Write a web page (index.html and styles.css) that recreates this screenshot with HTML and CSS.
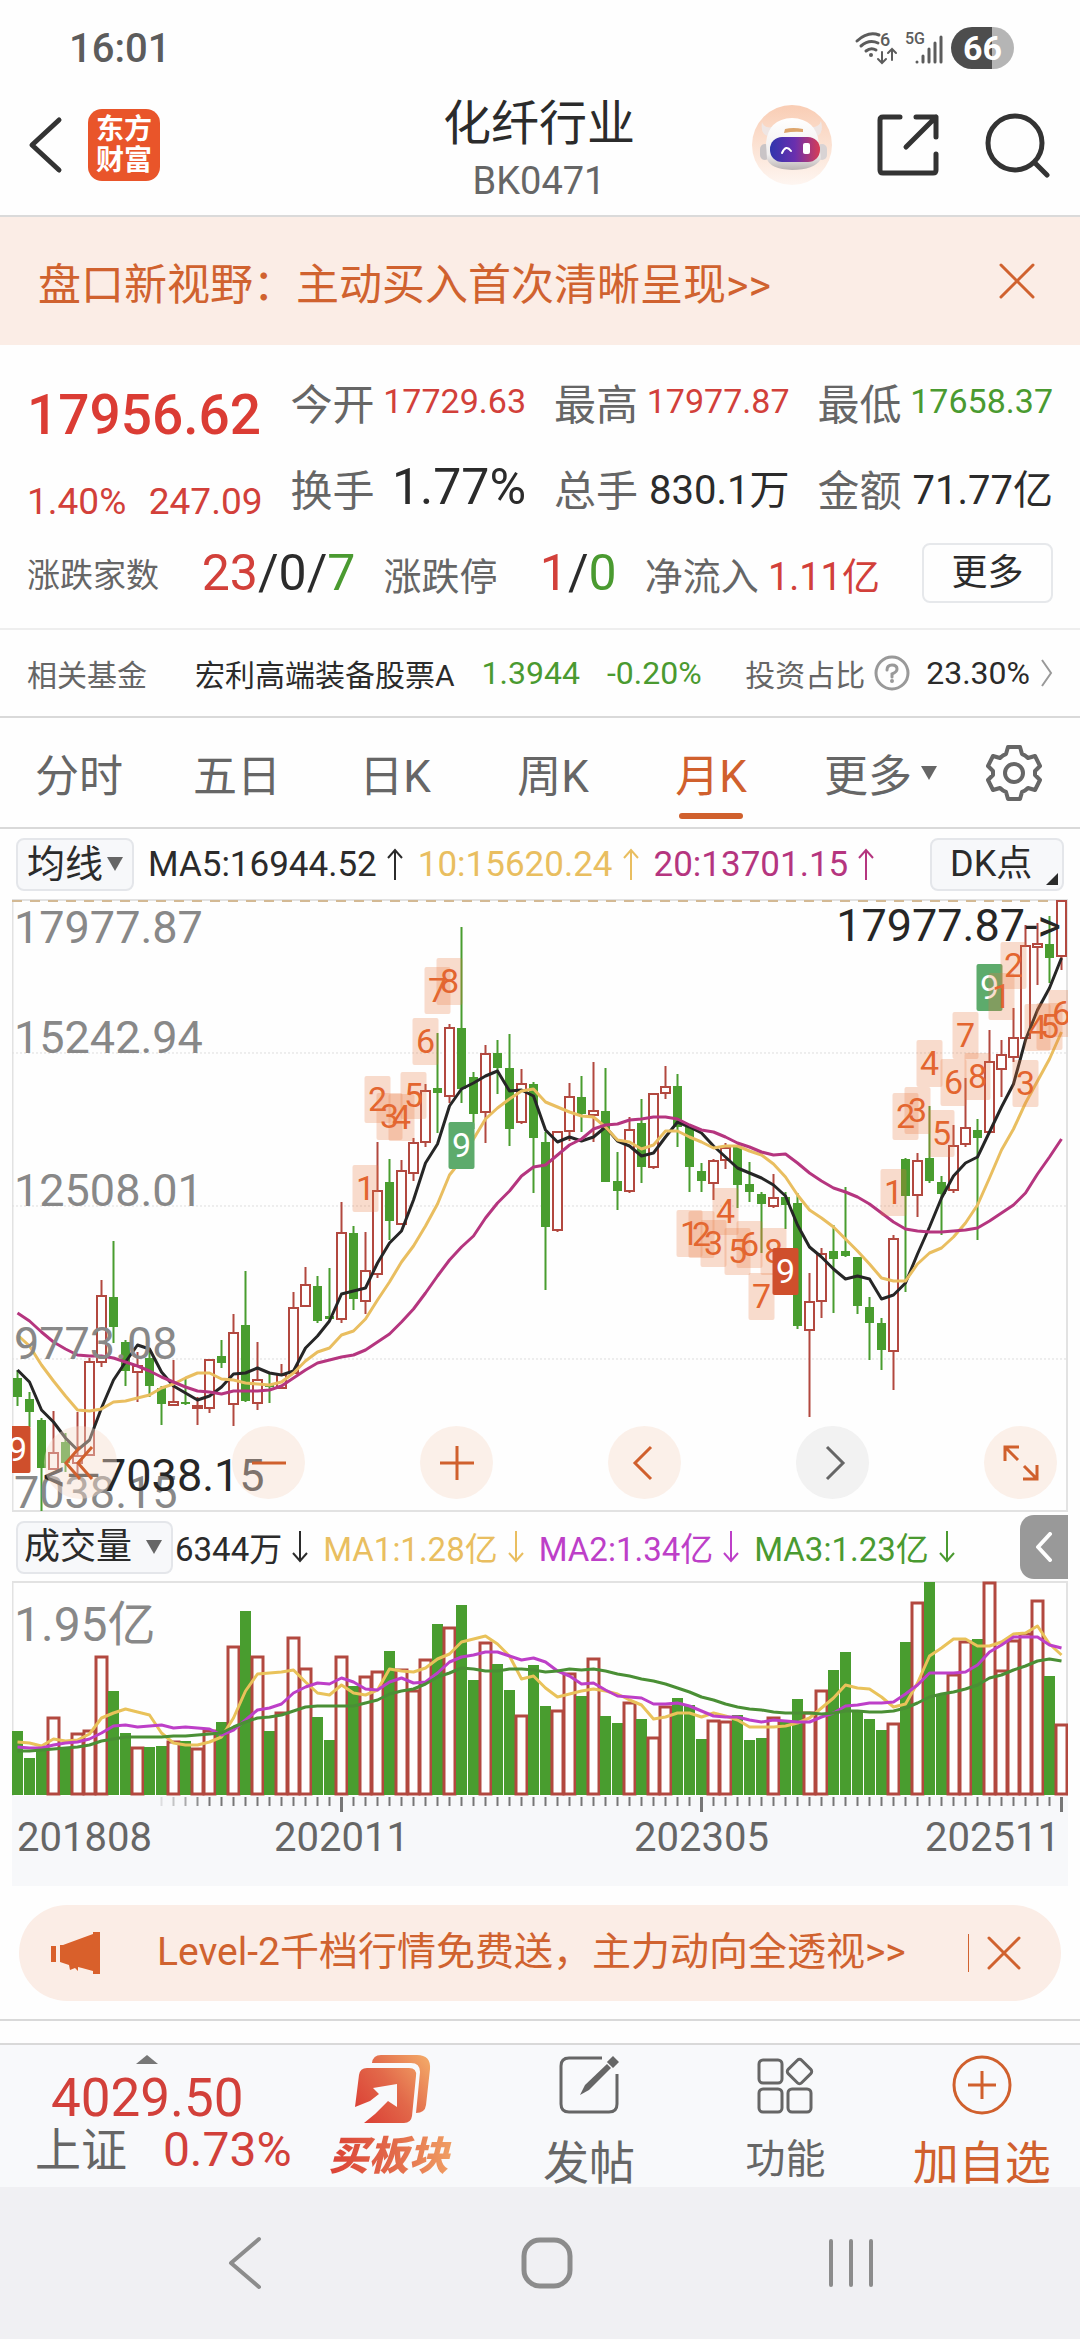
FILE: index.html
```html
<!DOCTYPE html>
<html lang="zh-CN">
<head>
<meta charset="utf-8">
<meta name="viewport" content="width=device-width, initial-scale=1">
<title>化纤行业 BK0471</title>
<link rel="stylesheet" href="styles.css">
</head>
<body>
<div class="statusbar">
  <span class="clock">16:01</span>
  <span class="status-icons">
    <svg width="42" height="34" viewBox="0 0 42 34" fill="none" stroke="#5c5c5c" stroke-width="3" stroke-linecap="round">
      <path d="M2 10Q13 0 24 4M6 15Q14 8 23 12M11 20Q16 16 21 19"/>
      <circle cx="16" cy="24" r="2" fill="#5c5c5c" stroke="none"/>
      <path d="M27 21V31M23 28L27 32L31 28M37 29V18M33 22L37 18L41 22" stroke-width="2"/>
      <text class="tiny" x="25" y="15" font-size="18">6</text>
    </svg>
    <svg width="38" height="34" viewBox="0 0 38 34" fill="none" stroke="#5c5c5c" stroke-width="4" stroke-linecap="round">
      <path d="M12 31V31M18 31V25M24 31V18M30 31V12M36 31V6" stroke-width="3"/>
      <text class="tiny" x="0" y="13" font-size="16">5G</text>
    </svg>
    <span class="battery">66</span>
  </span>
</div>

<header class="header">
  <div class="header-side">
    <button class="icon-btn" aria-label="返回">
      <svg width="36" height="58" viewBox="0 0 36 58" fill="none" stroke="#333" stroke-width="5" stroke-linecap="round" stroke-linejoin="round"><path d="M31 4L4 29L31 54"/></svg>
    </button>
    <a class="brand" href="#home">东方<br>财富</a>
  </div>
  <div class="title">
    <h1>化纤行业</h1>
    <p>BK0471</p>
  </div>
  <div class="header-side header-tools">
    <button class="icon-btn" aria-label="智能助手">
      <svg width="80" height="80" viewBox="0 0 80 80">
        <defs>
          <linearGradient id="halo" x1="0" y1="0" x2="0" y2="1"><stop offset="0" stop-color="#f9cdb4"/><stop offset="1" stop-color="#fef6f1"/></linearGradient>
          <linearGradient id="visor" x1="0" y1="0" x2="1" y2="0"><stop offset="0" stop-color="#2f35ad"/><stop offset=".5" stop-color="#6a2fae"/><stop offset="1" stop-color="#d83d55"/></linearGradient>
          <linearGradient id="shell" x1="0" y1="0" x2="0" y2="1"><stop offset="0" stop-color="#fff"/><stop offset=".7" stop-color="#f0eeee"/><stop offset="1" stop-color="#b9b2b2"/></linearGradient>
        </defs>
        <circle cx="40" cy="40" r="40" fill="url(#halo)"/>
        <path d="M10 17Q8 29 16 31L21 22Q12 24 10 17ZM69 16Q72 28 65 31L58 22Q67 23 69 16Z" fill="#efe6e4"/>
        <rect x="8" y="39" width="10" height="16" rx="5" fill="#c9c4c6"/><rect x="65" y="39" width="10" height="16" rx="5" fill="#d8d3d4"/>
        <path d="M14 38Q16 14 40 13Q64 14 67 38L69 54Q62 65 40 65Q18 64 15 54Z" fill="url(#shell)"/>
        <path d="M33 24Q41 22 51 24V27Q42 26 32 28Z" fill="#dda56c"/>
        <rect x="18" y="32" width="50" height="25" rx="12" fill="url(#visor)"/>
        <path d="M30 48Q34 39 39 46" fill="none" stroke="#fff" stroke-width="2" stroke-linecap="round"/>
        <rect x="51" y="38" width="7" height="11" rx="2" fill="#fff"/>
      </svg>
    </button>
    <button class="icon-btn" aria-label="分享">
      <svg width="64" height="64" viewBox="0 0 64 64" fill="none" stroke="#333" stroke-width="5" stroke-linecap="round" stroke-linejoin="round"><path d="M24 4H7Q4 4 4 7V57Q4 60 7 60H57Q60 60 60 57V41M40 4H60V24M60 4L30 34"/></svg>
    </button>
    <button class="icon-btn" aria-label="搜索">
      <svg width="66" height="66" viewBox="0 0 66 66" fill="none" stroke="#333" stroke-width="5" stroke-linecap="round"><circle cx="31" cy="31" r="27"/><path d="M51 51L63 63"/></svg>
    </button>
  </div>
</header>

<div class="notice">
  <a href="#notice">盘口新视野：主动买入首次清晰呈现&gt;&gt;</a>
  <button class="icon-btn" aria-label="关闭提示">
    <svg width="36" height="36" viewBox="0 0 36 36" stroke="#d0622f" stroke-width="3" stroke-linecap="round"><path d="M2 2L34 34M34 2L2 34"/></svg>
  </button>
</div>

<section class="quote">
  <div class="quote-grid">
    <div class="lead up price">17956.62</div>
    <div class="cell"><span>今开</span><b class="v34 up">17729.63</b></div>
    <div class="cell"><span>最高</span><b class="v34 up">17977.87</b></div>
    <div class="cell"><span>最低</span><b class="v34 down">17658.37</b></div>
    <div class="lead up change"><span>1.40%</span><span>247.09</span></div>
    <div class="cell"><span>换手</span><b class="v50">1.77%</b></div>
    <div class="cell"><span>总手</span><b class="v40">830.1万</b></div>
    <div class="cell"><span>金额</span><b class="v40">71.77亿</b></div>
  </div>
  <div class="breadth">
    <div class="cell small"><span>涨跌家数</span><b class="v50"><i class="up">23</i>/0/<i class="down">7</i></b></div>
    <div class="cell mid"><span>涨跌停</span><b class="v50"><i class="up">1</i>/<i class="down">0</i></b></div>
    <div class="cell mid"><span>净流入</span><b class="v38 up">1.11亿</b></div>
    <button class="more">更多</button>
  </div>
</section>

<a class="fund" href="#fund">
  <span class="muted">相关基金</span>
  <span class="fund-name">宏利高端装备股票A</span>
  <span class="down num">1.3944</span>
  <span class="down num">-0.20%</span>
  <span class="muted fund-ratio">投资占比</span>
  <svg class="help" width="36" height="36" viewBox="0 0 36 36" fill="none" stroke="#999" stroke-width="3"><circle cx="18" cy="18" r="16"/><path d="M13 15Q13 10 18 10Q23 10 23 14Q23 17 18 19V22" stroke-linecap="round"/><circle cx="18" cy="26" r="1" stroke-width="2"/></svg>
  <span class="num">23.30%</span>
  <svg class="go" width="12" height="30" viewBox="0 0 12 30" fill="none" stroke="#999" stroke-width="2"><path d="M1 2L10 15L1 28"/></svg>
</a>

<nav class="tabs" aria-label="周期">
  <button>分时</button>
  <button>五日</button>
  <button>日K</button>
  <button>周K</button>
  <button class="active">月K</button>
  <button>更多<i class="caret"></i></button>
  <button class="gear" aria-label="设置">
    <svg width="56" height="58" viewBox="0 0 56 58" fill="none" stroke="#666" stroke-width="4" stroke-linejoin="round"><path d="M22 3H34L36 10Q39 11 42 14L49 12L54 22L49 27V31L54 36L49 46L42 44Q39 47 36 48L34 55H22L20 48Q17 47 14 44L7 46L2 36L7 31V27L2 22L7 12L14 14Q17 11 20 10Z"/><circle cx="28" cy="29" r="9"/></svg>
  </button>
</nav>

<main>
  <div class="legend">
    <button class="chip">均线<i class="caret"></i></button>
    <span class="ma">MA5:16944.52<svg class="arrow"><use href="#arrow-up"/></svg></span>
    <span class="ma gold">10:15620.24<svg class="arrow"><use href="#arrow-up"/></svg></span>
    <span class="ma rose">20:13701.15<svg class="arrow"><use href="#arrow-up"/></svg></span>
    <button class="chip chip-dk">DK点<i class="corner"></i></button>
  </div>

  <div class="price-pane">
    <svg id="price" class="chart" viewBox="12 899 1056 614" role="img" aria-label="月K线"></svg>
    <div class="chart-tools">
      <button aria-label="最早"><svg viewBox="0 0 36 36"><path d="M17 2L3 18L17 34M29 2L15 18L29 34"/></svg></button>
      <button aria-label="缩小"><svg viewBox="0 0 36 36"><path d="M1 18H35"/></svg></button>
      <button aria-label="放大"><svg viewBox="0 0 36 36"><path d="M1 18H35M18 1V35"/></svg></button>
      <button aria-label="左移"><svg viewBox="0 0 36 36"><path d="M24 2L8 18L24 34"/></svg></button>
      <button class="idle" aria-label="右移"><svg viewBox="0 0 36 36"><path d="M12 2L28 18L12 34"/></svg></button>
      <button aria-label="全屏"><svg viewBox="0 0 36 36"><path d="M2 16V2H16M2 2L15 15M34 20V34H20M34 34L21 21"/></svg></button>
    </div>
  </div>

  <div class="legend legend-vol">
    <button class="chip chip-vol">成交量<i class="caret"></i></button>
    <span class="ma">6344万<svg class="arrow"><use href="#arrow-down"/></svg></span>
    <span class="ma gold">MA1:1.28亿<svg class="arrow"><use href="#arrow-down"/></svg></span>
    <span class="ma violet">MA2:1.34亿<svg class="arrow"><use href="#arrow-down"/></svg></span>
    <span class="ma down">MA3:1.23亿<svg class="arrow"><use href="#arrow-down"/></svg></span>
    <button class="drawer" aria-label="展开"><svg width="18" height="30" viewBox="0 0 18 30" fill="none" stroke="#fff" stroke-width="4" stroke-linecap="round" stroke-linejoin="round"><path d="M15 2L3 15L15 28"/></svg></button>
  </div>
  <svg id="volume" class="chart" viewBox="12 1581 1056 305" role="img" aria-label="成交量"></svg>
</main>

<div class="promo">
  <svg width="50" height="42" viewBox="0 0 50 42" fill="#d9602b"><path d="M0 14H5V30H0ZM9 13H12L42 2V0H49V42H42V39L31 36L27 35V39L24 36L19 38L18 33L9 30Z"/></svg>
  <a href="#level2">Level-2千档行情免费送，主力动向全透视&gt;&gt;</a>
  <button class="icon-btn" aria-label="关闭推广">
    <svg width="34" height="34" viewBox="0 0 34 34" stroke="#d0622f" stroke-width="3" stroke-linecap="round"><path d="M2 2L32 32M32 2L2 32"/></svg>
  </button>
</div>

<div class="spacer"></div>

<footer class="dock">
  <button class="index up">
    <i class="caret-up"></i>
    <span class="index-value">4029.50</span>
    <span class="index-row"><span class="index-name">上证</span><span>0.73%</span></span>
  </button>
  <button class="buy">
    <svg width="76" height="70" viewBox="0 0 76 70">
      <defs><linearGradient id="flame" gradientUnits="userSpaceOnUse" x1="4" y1="60" x2="72" y2="6"><stop offset="0" stop-color="#db4035"/><stop offset=".5" stop-color="#e2694a"/><stop offset="1" stop-color="#f2a566"/></linearGradient></defs>
      <g fill="url(#flame)"><path d="M17 8Q18 0 26 0H62Q76 0 75 14L71 50Q70 58 61 58L65 17Q65 8 56 8Z"/>
      <path d="M4 20Q5 13 12 13H54Q62 13 61 21L57 61Q56 68 49 68H9L20 59L33 46L42 52V29L18 33L24 39L15 46L0 52Z"/></g>
    </svg>
    <strong>买板块</strong>
  </button>
  <button>
    <svg width="60" height="60" viewBox="0 0 60 60" fill="none" stroke="#666" stroke-width="3"><path d="M43 3H10Q2 3 2 11V49Q2 57 10 57H50Q58 57 58 49V19"/><path d="M21 40L26 30L48 9L52 13L30 35Z" fill="#666" stroke="none"/><path d="M50 7L54 3L58 7L54 11Z" fill="#666" stroke="#666"/></svg>
    <span>发帖</span>
  </button>
  <button>
    <svg width="58" height="60" viewBox="0 0 58 60" fill="none" stroke="#666" stroke-width="3"><rect x="3" y="5" width="23" height="23" rx="4"/><rect x="3" y="34" width="23" height="23" rx="4"/><rect x="32" y="34" width="23" height="23" rx="4"/><rect x="34" y="7" width="19" height="19" rx="3" transform="rotate(45 43.500 16.500)"/></svg>
    <span class="func">功能</span>
  </button>
  <button class="add">
    <svg width="60" height="60" viewBox="0 0 60 60" fill="none" stroke="#d0602d" stroke-width="3"><circle cx="30" cy="30" r="28"/><path d="M16 30H44M30 16V44"/></svg>
    <span>加自选</span>
  </button>
</footer>

<nav class="sysnav" aria-label="系统导航">
  <button aria-label="后退"><svg width="36" height="54" viewBox="0 0 36 54" fill="none" stroke="#8c8c8c" stroke-width="4" stroke-linecap="round" stroke-linejoin="round"><path d="M32 3L4 27L32 51"/></svg></button>
  <button aria-label="主页"><svg width="52" height="52" viewBox="0 0 52 52" fill="none" stroke="#8c8c8c" stroke-width="5"><rect x="3" y="3" width="46" height="46" rx="16"/></svg></button>
  <button aria-label="最近任务"><svg width="46" height="50" viewBox="0 0 46 50" stroke="#8c8c8c" stroke-width="4" stroke-linecap="round"><path d="M3 3V47M23 3V47M43 3V47"/></svg></button>
</nav>

<svg class="sprite" aria-hidden="true">
  <symbol id="arrow-up" viewBox="0 0 18 34"><path d="M9 33V4M2 11L9 3L16 11" fill="none" stroke="currentColor" stroke-width="2"/></symbol>
  <symbol id="arrow-down" viewBox="0 0 18 34"><path d="M9 1V30M2 23L9 31L16 23" fill="none" stroke="currentColor" stroke-width="2"/></symbol>
</svg>
<script src="chart.js"></script>
</body>
</html>
```

FILE: styles.css
```css
* { box-sizing: border-box; }
body {
  margin: 0;
  background: #fefefe;
  color: #2b2b2b;
  font-family: Roboto, "Noto Sans CJK SC", sans-serif;
  font-size: 36px;
}
button { margin: 0; padding: 0; border: 0; background: none; font: inherit; color: inherit; }
a { color: inherit; text-decoration: none; }
h1, p { margin: 0; font-weight: 400; }
b, i { font-weight: 400; font-style: normal; }
svg { display: block; flex: none; }
.sprite { width: 0; height: 0; position: absolute; }
.up { color: #d2403a; }
.down { color: #4a9a30; }
.gold { color: #e9be60; }
.rose { color: #b5357f; }
.violet { color: #bd3fc8; }
.muted { color: #666; }
.icon-btn { display: flex; align-items: center; }

.statusbar { display: flex; justify-content: space-between; align-items: center; height: 96px; padding: 0 66px 0 69px; }
.clock { font-size: 40px; font-weight: 500; color: #5c5c5c; }
.status-icons { display: flex; align-items: center; gap: 8px; }
.status-icons svg { overflow: visible; }
.tiny { font-weight: 500; fill: #5c5c5c; stroke: none; }
.battery {
  width: 63px; height: 42px; border-radius: 21px;
  background: linear-gradient(90deg, #4d4d4d 65%, #b5b5b5 65%);
  color: #fff; font-size: 34px; font-weight: 700; line-height: 42px; text-align: center;
}

.header {
  display: grid; grid-template-columns: 1fr auto 1fr; align-items: start;
  height: 121px; padding: 0 30px 0 28px; border-bottom: 2px solid #dadada;
}
.header-side { display: flex; align-items: center; gap: 24px; height: 98px; }
.header-tools { justify-content: flex-end; gap: 44px; }
.brand {
  width: 72px; height: 72px; padding-top: 5px; border-radius: 14px; background: #e9552a;
  color: #fff; font-size: 28px; font-weight: 700; line-height: 31px; text-align: center;
}
.title { text-align: center; }
.title h1 { font-size: 48px; line-height: 56px; }
.title p { font-size: 38px; line-height: 58px; color: #666; }

.notice {
  display: flex; justify-content: space-between; align-items: center;
  height: 128px; padding: 0 45px 0 38px; background: #fbede6; color: #d0622f; font-size: 43px;
}

.quote { padding: 13px 27px 12px; border-bottom: 2px solid #eee; }
.quote-grid { display: grid; grid-template-columns: repeat(4, 1fr); grid-auto-rows: 86px; column-gap: 28px; }
.lead { display: flex; align-items: center; padding-top: 28px; white-space: nowrap; }
.price { font-size: 55px; font-weight: 500; color: #db3c34; }
.change { justify-content: space-between; font-size: 37px; }
.cell { display: flex; justify-content: space-between; align-items: center; white-space: nowrap; color: #666; font-size: 42px; }
.cell b { color: #2b2b2b; }
.cell b.up, .cell .up { color: #d2403a; }
.cell b.down, .cell .down { color: #4a9a30; }
.cell .v34 { font-size: 34px; }
.cell .v38 { font-size: 38px; }
.cell .v40 { font-size: 40px; }
.cell .v50 { font-size: 50px; }
.cell.small { font-size: 33px; }
.cell.mid { font-size: 38px; }
.breadth { display: grid; grid-template-columns: 328fr 233fr 235fr 145px; column-gap: 28px; align-items: center; height: 86px; }
.more { height: 60px; margin-left: 14px; border: 2px solid #e6e8eb; border-radius: 8px; font-size: 36px; line-height: 54px; }

.fund {
  display: flex; align-items: center; height: 88px; padding: 0 27px;
  border-bottom: 2px solid #d9d9d9; font-size: 30px; white-space: nowrap;
}
.fund-name { margin-left: 48px; }
.fund .num { font-size: 32px; margin-left: 27px; }
.fund .fund-ratio { margin-left: auto; }
.fund .help { margin-left: 9px; }
.fund .help + .num { margin-left: 16px; }
.fund .go { margin-left: 11px; }

.tabs {
  display: grid; grid-template-columns: 158fr 158fr 158fr 158fr 158fr 181fr 109fr;
  height: 111px; border-bottom: 2px solid #d9d9d9; color: #666; font-size: 44px;
}
.tabs button { position: relative; display: flex; align-items: center; justify-content: center; gap: 9px; }
.tabs .active { color: #d0602d; }
.tabs .active::after {
  content: ""; position: absolute; left: 50%; bottom: 8px;
  width: 64px; height: 6px; margin-left: -32px; border-radius: 3px; background: #d0602d;
}
.tabs .gear { justify-content: flex-end; padding-right: 38px; }
.caret { border: 8px solid transparent; border-top: 14px solid #666; border-bottom: 0; }

main { padding: 0 12px; }
.legend { display: flex; align-items: center; gap: 14px; height: 70px; padding: 0 4px; white-space: nowrap; }
.chip {
  position: relative; display: flex; align-items: center; gap: 4px; height: 53px; padding: 0 9px;
  border: 2px solid #e4e6ea; border-radius: 8px; background: #f7f8fa; font-size: 38px; line-height: 48px;
}
.chip-dk { margin-left: auto; width: 134px; padding-left: 18px; font-size: 36px; }
.chip-vol { gap: 14px; padding: 0 9px 0 6px; font-size: 36px; }
.corner { position: absolute; right: 4px; bottom: 4px; border-left: 12px solid transparent; border-bottom: 12px solid #2b2b2b; }
.ma { display: flex; align-items: center; gap: 9px; font-size: 35px; }
.arrow { width: 18px; height: 34px; }
.legend-vol { height: 68px; padding-right: 0; }
.legend-vol .chip + .ma { margin-left: -12px; }
.legend-vol .ma { font-size: 33px; }
.drawer { display: flex; align-items: center; justify-content: center; width: 48px; height: 64px; margin-left: auto; border-radius: 14px 0 0 14px; background: #999; }

.chart { width: 100%; height: auto; font-family: Roboto, "Noto Sans CJK SC", sans-serif; }
.price-pane { position: relative; }
.chart-tools { position: absolute; left: 32px; right: 11px; bottom: 14px; display: flex; justify-content: space-between; }
.chart-tools button { display: flex; align-items: center; justify-content: center; width: 73px; height: 73px; border-radius: 50%; background: rgba(247, 222, 206, .42); }
.chart-tools svg { width: 36px; height: 36px; fill: none; stroke: #d0602d; stroke-width: 3; }
.chart-tools .idle { background: rgba(230, 230, 230, .5); }
.chart-tools .idle svg { stroke: #666; }

.promo {
  display: flex; align-items: center; height: 96px; margin: 19px 19px 18px; padding: 0 40px 0 32px;
  border-radius: 48px; background: #fbede6; color: #d0622f; font-size: 39px; line-height: 94px; white-space: nowrap;
}
.promo a { height: 96px; margin-left: 56px; }
.promo .icon-btn { height: 38px; margin-left: auto; padding-left: 18px; border-left: 1px solid #d0622f; }
.spacer { height: 26px; border: solid #d9d9d9; border-width: 2px 0; }

.dock { display: grid; grid-template-columns: 3fr 2fr 2fr 2fr 2fr; height: 142px; background: #f8f9fb; color: #666; }
.dock button { display: flex; flex-direction: column; align-items: center; padding-top: 10px; font-size: 46px; line-height: 52px; white-space: nowrap; }
.dock span { margin-top: 22px; }
.dock .func { font-size: 40px; line-height: 46px; }
.dock .add { color: #d0602d; }
.dock .up { color: #d2403a; }
.caret-up { border: 11px solid transparent; border-bottom: 9px solid #777; border-top: 0; }
.dock .index-value { margin-top: 8px; font-size: 53px; }
.dock .index-row { display: flex; gap: 36px; margin: 0 0 0 32px; font-size: 48px; }
.dock .index-row span { margin: 0; }
.dock .index-row .index-name { color: #666; font-size: 46px; }
.dock strong {
  margin-top: 6px; padding: 0 10px 0 2px; font-size: 40px; font-weight: 900; font-style: italic;
  background: linear-gradient(90deg, #db4035, #e2694a 50%, #f2a566);
  -webkit-background-clip: text; background-clip: text; color: transparent;
}

.sysnav { display: grid; grid-template-columns: 490fr 113fr 477fr; height: 152px; background: #f0f0f3; }
.sysnav button { display: flex; align-items: center; justify-content: center; }
.sysnav button:last-child { padding-left: 18px; }
```

FILE: chart.js
```js
const UP = '#b2483f', DOWN = '#499d2f';
const X0 = 17.5, STEP = 12;
const x = i => X0 + STEP * i;

// One candle per month: direction, high, body top, body bottom, low
const candles = `g1370,1378,1397,1406 g1392,1399,1412,1427 g1418,1420,1468,1511 r1411,1453,1469,1469 g1433,1442,1463,1472 r1412,1456,1463,1477 r1358,1362,1455,1455 r1280,1296,1362,1367
g1241,1297,1327,1343 g1340,1342,1371,1386 r1352,1366,1372,1402 g1350,1358,1386,1397 g1386,1388,1404,1425 r1360,1402,1405,1405 g1377,1402,1404,1405 r1397,1406,1408,1425
r1359,1360,1408,1413 g1340,1356,1363,1368 r1314,1333,1404,1426 g1271,1325,1401,1402 r1342,1380,1403,1410 g1374,1385,1387,1403 r1364,1375,1388,1388 r1292,1308,1373,1373
r1267,1285,1306,1306 g1276,1286,1321,1323 g1268,1316,1319,1320 r1202,1233,1319,1323 g1226,1233,1299,1310 r1232,1271,1301,1314 r1142,1191,1274,1278 g1159,1182,1221,1240
r1160,1171,1224,1224 r1138,1143,1173,1181 r1084,1091,1142,1147 g1033,1088,1093,1133 r1024,1028,1096,1103 g927,1028,1089,1103 g1072,1077,1114,1129 r1045,1054,1112,1143
g1040,1053,1068,1094 g1034,1068,1129,1146 r1069,1084,1122,1124 g1082,1084,1138,1193 g1132,1142,1227,1290 r1132,1132,1230,1232 r1083,1097,1131,1141 g1076,1097,1114,1132
r1062,1111,1115,1142 g1068,1111,1182,1182 g1152,1181,1191,1210 r1117,1130,1191,1193 g1099,1123,1167,1183 r1093,1094,1167,1169 r1066,1087,1093,1099 g1074,1086,1127,1147
g1125,1127,1167,1192 g1163,1171,1181,1192 r1159,1161,1183,1200 r1143,1148,1160,1169 g1145,1146,1185,1208 g1162,1184,1192,1202 g1192,1194,1204,1253 r1174,1198,1206,1208
g1192,1197,1205,1229 g1193,1203,1326,1329 r1273,1302,1330,1417 r1248,1254,1301,1318 g1225,1251,1259,1313 g1187,1251,1256,1257 g1257,1257,1306,1314 g1297,1307,1323,1360
g1318,1323,1350,1370 r1235,1239,1351,1390 g1158,1159,1196,1292 r1153,1161,1195,1217 g1106,1158,1181,1183 g1176,1182,1194,1235 r1125,1146,1190,1193 r1078,1128,1144,1147
g1119,1130,1138,1240 r1030,1062,1132,1132 r1040,1055,1069,1097 r1008,1038,1057,1062 r925,946,1038,1038 r923,944,947,985 g916,944,958,983 r900,901,956,970`
  .split(/\s+/).map(s => [s[0], ...s.slice(1).split(',').map(Number)]);

const ma5 = [1370,1382,1410,1422,1438,1450,1440,1408,1380,1362,1345,1349,1372,1386,1393,1400,1396,1387,1374,1373,1368,1373,1375,1371,1348,1336,1321,1294,1291,1288,1263,1243,1231,1200,1163,1144,1106,1089,1083,1076,1071,1091,1090,1096,1130,1142,1137,1141,1137,1127,1141,1146,1156,1153,1137,1122,1127,1133,1146,1157,1168,1173,1178,1185,1196,1225,1247,1257,1269,1279,1276,1279,1299,1295,1283,1254,1227,1198,1176,1163,1157,1132,1107,1084,1040,1010,988,958];
const ma10 = [1335,1346,1365,1381,1396,1410,1411,1409,1402,1401,1398,1395,1388,1384,1378,1373,1373,1379,1380,1383,1384,1385,1382,1373,1361,1352,1348,1335,1331,1319,1300,1282,1262,1246,1226,1204,1175,1160,1139,1119,1108,1099,1091,1089,1102,1107,1112,1116,1117,1127,1140,1142,1149,1145,1131,1131,1137,1142,1148,1146,1146,1151,1155,1164,1177,1195,1210,1218,1227,1239,1251,1264,1278,1281,1281,1264,1253,1248,1237,1223,1205,1178,1150,1129,1103,1081,1059,1032];
const ma20 = [1313,1321,1332,1342,1349,1355,1356,1356,1358,1362,1366,1371,1377,1382,1387,1391,1392,1394,1391,1391,1391,1390,1386,1378,1370,1363,1360,1357,1355,1350,1342,1334,1322,1309,1293,1276,1260,1247,1236,1218,1203,1191,1176,1167,1165,1155,1145,1139,1129,1125,1124,1120,1119,1117,1117,1119,1125,1130,1132,1137,1143,1147,1152,1155,1154,1163,1173,1181,1188,1192,1197,1204,1213,1222,1229,1231,1232,1232,1231,1230,1228,1221,1213,1205,1193,1174,1157,1139];

// Sequence markers: month index, top, digit, solid fill
const marks = [[29,1165,1],[30,1076,2],[31,1093,3],[32,1094,4],[33,1072,5],[34,1018,6],[35,967,7],[36,958,8],[37,1122,9,'#5dab6c'],
  [56,1210,1],[57,1211,2],[58,1220,3],[59,1188,4],[60,1228,5],[61,1221,6],[62,1273,7],[63,1228,8],[64,1248,9,'#cf4f2c'],
  [73,1169,1],[74,1093,2],[75,1087,3],[76,1040,4],[77,1110,5],[78,1059,6],[79,1012,7],[80,1053,8],[81,964,9,'#5dab6c'],
  [82,973,1],[83,942,2],[84,1060,3],[85,1004,4],[86,1003,5],[87,990,6],[0,1426,9,'#cf4f2c']];

const bars = [1731,1758,1748,1717,1747,1733,1730,1656,1691,1733,1747,1747,1746,1741,1741,1748,1730,1722,1646,1611,1656,1731,1712,1637,1668,1717,1740,1656,1686,1676,1671,1651,1669,1690,1659,1624,1627,1605,1680,1642,1664,1690,1715,1665,1706,1710,1673,1696,1658,1716,1723,1702,1719,1737,1706,1698,1705,1739,1720,1721,1715,1740,1738,1717,1722,1699,1712,1690,1670,1652,1712,1719,1730,1723,1642,1602,1582,1694,1674,1641,1639,1582,1670,1640,1633,1600,1676,1724];
const vol1 = [1742,1743,1746,1739,1741,1740,1734,1718,1713,1709,1712,1715,1733,1743,1745,1745,1742,1737,1718,1691,1674,1673,1672,1670,1682,1693,1695,1685,1693,1695,1690,1669,1671,1672,1668,1659,1654,1642,1639,1636,1644,1656,1679,1676,1688,1697,1694,1691,1689,1691,1694,1700,1705,1719,1717,1713,1713,1717,1713,1716,1720,1727,1727,1727,1726,1723,1718,1708,1698,1685,1688,1689,1697,1707,1704,1683,1656,1648,1639,1639,1646,1646,1642,1634,1633,1626,1644,1655];
const vol2 = [1747,1748,1748,1745,1743,1742,1739,1733,1726,1725,1727,1726,1725,1728,1727,1728,1729,1735,1730,1720,1710,1708,1704,1693,1687,1683,1684,1678,1682,1689,1690,1682,1678,1683,1682,1673,1662,1657,1655,1652,1652,1656,1660,1658,1662,1671,1676,1684,1683,1690,1696,1697,1698,1704,1704,1703,1706,1711,1716,1717,1717,1720,1722,1720,1721,1722,1722,1717,1713,1706,1705,1703,1703,1702,1694,1685,1673,1673,1673,1672,1665,1652,1645,1637,1637,1637,1645,1648];
const vol3 = [1751,1751,1750,1749,1748,1747,1745,1741,1739,1737,1737,1737,1737,1736,1736,1735,1734,1733,1727,1722,1718,1717,1715,1711,1707,1706,1706,1706,1706,1703,1700,1694,1691,1689,1684,1677,1673,1668,1669,1671,1671,1669,1669,1670,1672,1671,1669,1670,1669,1671,1674,1676,1679,1681,1684,1688,1692,1697,1700,1704,1707,1709,1710,1712,1713,1713,1713,1714,1713,1711,1711,1712,1712,1711,1708,1703,1697,1694,1692,1689,1685,1678,1675,1670,1666,1661,1659,1661];

const line = (data, color) =>
  `<polyline points="${data.map((v, i) => x(i) + ',' + v).join(' ')}" fill="none" stroke="${color}" stroke-width="3" stroke-linejoin="round"/>`;
const text = (tx, ty, size, fill, s, anchor = 'start') =>
  `<text x="${tx}" y="${ty}" font-size="${size}" fill="${fill}" text-anchor="${anchor}">${s}</text>`;

function drawPrice() {
  let out = '<path d="M12 900H1067V1511H12.500V900" fill="none" stroke="#e2e2e2" stroke-width="2"/>';
  out += '<path d="M12 901H1066" stroke="#d3b994" stroke-width="2" stroke-dasharray="10 8"/>';
  out += '<path d="M12 1053H1067M12 1206H1067M12 1359H1067" stroke="#ddd" stroke-dasharray="2 2"/>';
  candles.forEach(([dir, high, top, bottom, low], i) => {
    const cx = x(i);
    if (dir === 'g') {
      out += `<path d="M${cx} ${high}V${low}" stroke="${DOWN}" stroke-width="2"/>`;
      out += `<rect x="${cx - 4.5}" y="${top}" width="9" height="${bottom - top}" fill="${DOWN}"/>`;
    } else {
      out += `<path d="M${cx} ${high}V${top}M${cx} ${bottom}V${low}" stroke="${UP}" stroke-width="2"/>`;
      out += `<rect x="${cx - 4.5}" y="${top}" width="9" height="${bottom - top}" fill="#fefefe" stroke="${UP}" stroke-width="2"/>`;
    }
  });
  out += line(ma5, '#262626') + line(ma10, '#e9be60') + line(ma20, '#b5357f');
  marks.forEach(([i, top, digit, solid]) => {
    out += `<rect x="${x(i) - 13}" y="${top}" width="26" height="47" rx="2" fill="${solid || 'rgba(233,120,60,.26)'}"/>`;
    out += text(x(i), top + 35, 34, solid ? '#fff' : '#e3652f', digit, 'middle');
  });
  [['17977.87', 943], ['15242.94', 1053], ['12508.01', 1206], ['9773.08', 1359], ['7038.15', 1508]]
    .forEach(([s, y]) => { out += text(14, y, 45, '#888', s); });
  out += text(1061, 941, 45, '#262626', '17977.87-&gt;', 'end');
  out += text(43, 1491, 45, '#262626', '&lt;—7038.15');
  document.getElementById('price').innerHTML = out;
}

function drawVolume() {
  let out = '<rect x="12" y="1796" width="1056" height="90" fill="#f7f8fa"/>';
  out += '<path d="M12.500 1796V1582H1067V1796" fill="none" stroke="#e2e2e2" stroke-width="2"/>';
  bars.forEach((top, i) => {
    const cx = x(i);
    out += candles[i][0] === 'g'
      ? `<rect x="${cx - 5.5}" y="${top}" width="11" height="${1795 - top}" fill="${DOWN}"/>`
      : `<rect x="${cx - 5.5}" y="${top + 1}" width="11" height="${1793 - top}" fill="#fefefe" stroke="${UP}" stroke-width="3"/>`;
    if (i > 11) {
      const major = [27, 57, 87].includes(i);
      out += `<path d="M${cx} 1797V${major ? 1812 : 1806}" stroke="#777" stroke-width="${major ? 3 : 2}" opacity="${Math.min(1, (i - 11) / 5)}"/>`;
    }
  });
  out += line(vol1, '#e9c25a') + line(vol2, '#bd3fc8') + line(vol3, '#4a8f35');
  out += text(14, 1641, 48, '#888', '1.95亿');
  out += text(17, 1851, 40, '#666', '201808') + text(x(27), 1851, 40, '#666', '202011', 'middle');
  out += text(x(57), 1851, 40, '#666', '202305', 'middle') + text(1060, 1851, 40, '#666', '202511', 'end');
  document.getElementById('volume').innerHTML = out;
}

drawPrice();
drawVolume();
```
